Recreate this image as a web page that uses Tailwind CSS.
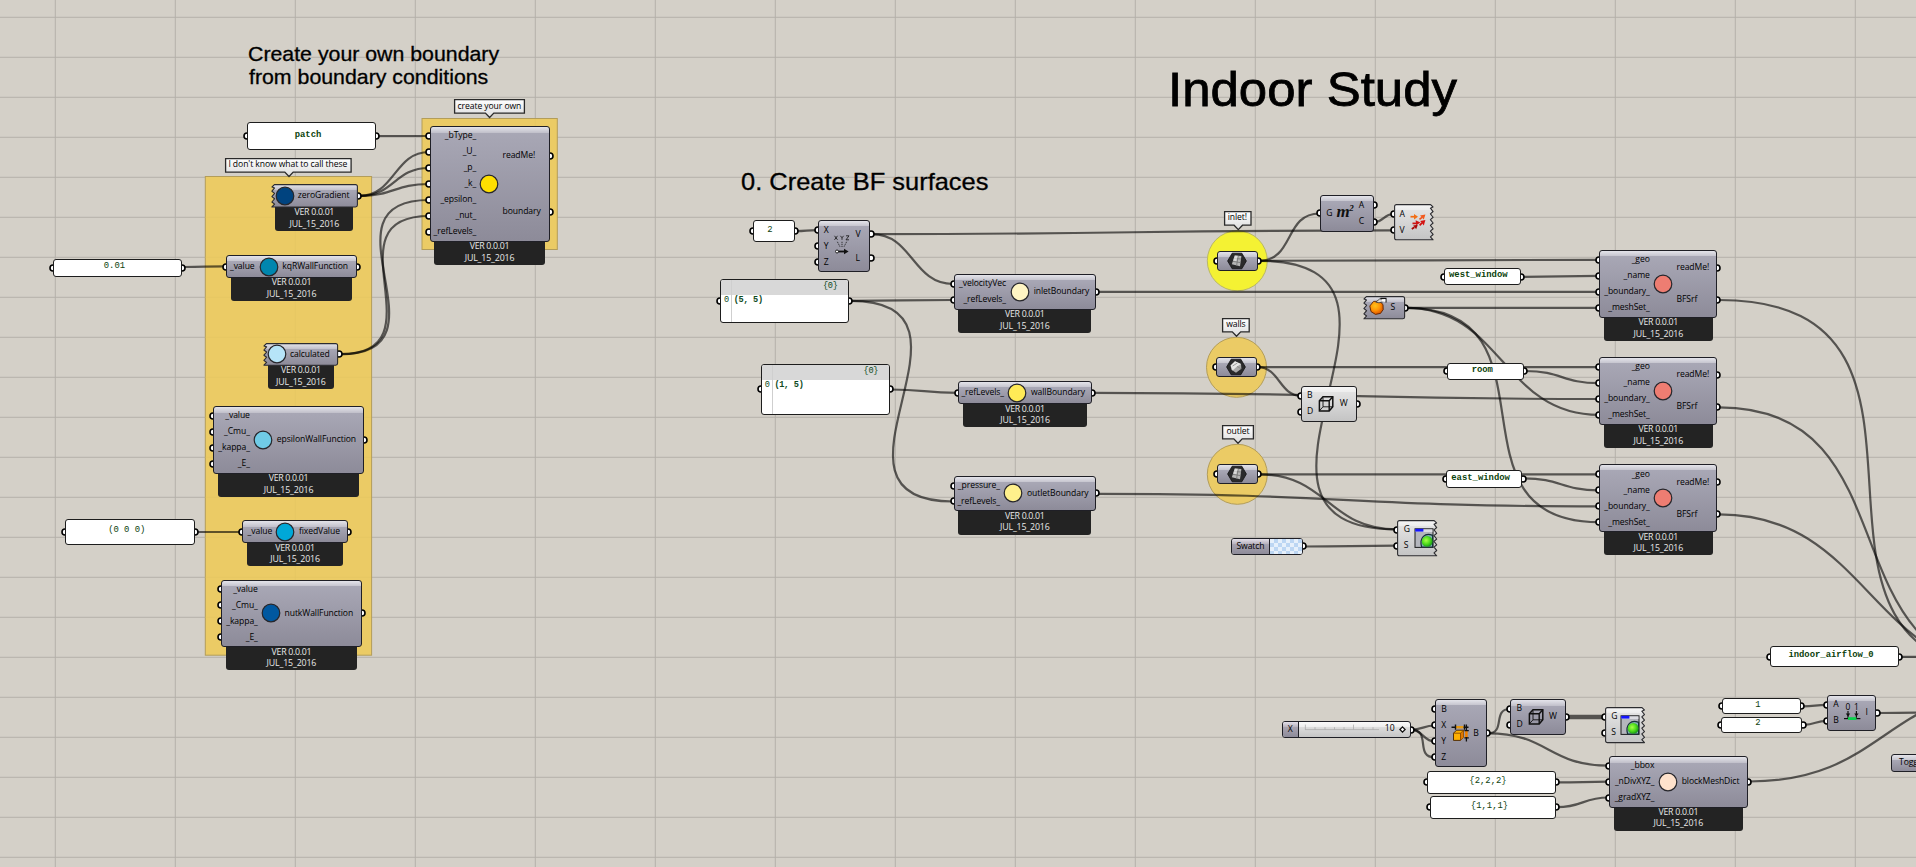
<!DOCTYPE html>
<html lang="en">
<head>
<meta charset="utf-8">
<title>Indoor Study</title>
<script src="https://cdn.jsdelivr.net/npm/@tailwindcss/browser@4"></script>
</head>
<body class="overflow-hidden">
<main id="canvas" class="relative h-[867px] w-[1916px] overflow-hidden bg-[#d4d0c8] font-['Open_Sans','Noto_Sans',sans-serif] text-[8.6px] leading-none tracking-[-.08px] text-black">
  <svg id="backdrop" class="absolute inset-0 h-full w-full" viewBox="0 0 1916 867"></svg>
</main>

<script>
const canvas = document.getElementById('canvas');
const backdrop = document.getElementById('backdrop');
let uid = 0;

/* ---------- grid, groups and wires ---------- */
let bg = '';
const groupRect = (x, y, w, h) => `<rect x="${x}" y="${y}" width="${w}" height="${h}" fill="#ebcb65" stroke="#b39d59" stroke-width="1"/>`;
const groupDot = (x, y, c, s) => `<circle cx="${x}" cy="${y}" r="30" fill="${c}" stroke="${s}" stroke-width="1"/>`;
bg += groupRect(205.3, 176.5, 166.3, 478.7) + groupRect(422, 118.5, 135.3, 131);
bg += groupDot(1237.3, 260.8, '#f4f233', '#b9b767') + groupDot(1236.5, 367.3, '#ebcb65', '#b39d59') + groupDot(1237.3, 474.3, '#ebcb65', '#b39d59');
let grid = '';
for (let x = 55.3; x < 1916; x += 120) grid += `M${x} 0V867`;
for (let y = 17.3; y < 867; y += 40) grid += `M0 ${y}H1916`;
bg = `<path d="${grid}" stroke="#b4b1aa" stroke-width="1" fill="none"/>` + bg +
     `<path d="M295.3 177V655M535.3 119V249M205.3 217.3H371M205.3 257.3H371M205.3 297.3H371M205.3 337.3H371M205.3 377.3H371M205.3 417.3H371M205.3 457.3H371M205.3 497.3H371M205.3 537.3H371M205.3 577.3H371M205.3 617.3H371" stroke="#e3c562" stroke-width=".6" fill="none"/>`;

const wires = [
  [376, 136, 429, 136], [360, 195.8, 429, 152], [360, 195.8, 429, 168], [360, 195.8, 429, 184],
  [340.5, 354.2, 429, 200], [340.5, 354.2, 429, 216], [184, 267, 225, 266.3], [196.5, 532, 241, 532],
  [796, 231.2, 817, 230.2], [872, 234.1, 953, 284], [872, 234.1, 1393, 230.4],
  [851, 300.8, 953, 300], [851, 300.8, 953, 501.5], [891, 389.5, 957.5, 392.8],
  [1098, 291.8, 1599, 291.8], [1093, 392.8, 1599, 399], [1098, 493.8, 1599, 506.4],
  [1259, 260.8, 1319.5, 213.5], [1259, 260.8, 1599, 259.8], [1259, 260.8, 1397, 529.4],
  [1375, 221.8, 1393, 214], [1406, 307.8, 1599, 307.8], [1406, 307.8, 1599, 414.9], [1406, 307.8, 1599, 522.2],
  [1258, 367.2, 1599, 367.2], [1258, 367.2, 1301, 395.8], [1259, 474.4, 1599, 474.4], [1259, 474.4, 1397, 529.4],
  [1522, 276.8, 1599, 275.8], [1525, 371, 1599, 383.2], [1523, 478.3, 1599, 490.3], [1304, 546.5, 1397, 545.6],
  [1411, 729.7, 1435, 725.5], [1411, 729.7, 1435, 741.5], [1411, 729.7, 1435, 757.5],
  [1488, 733.3, 1510, 709], [1488, 733.3, 1608.5, 765.7], [1557, 782.4, 1608.5, 781.7], [1557, 807.2, 1608.5, 797.5],
  [1567, 715.8, 1605, 715.8], [1567, 718.2, 1605, 718.2],
  [1803, 706.4, 1827, 704.8], [1804, 724.8, 1827, 720.8],
  [1719, 300, 2020, 672], [1719, 407.3, 2020, 672], [1719, 514.4, 2020, 672],
  [1900.5, 656.8, 2020, 657.4], [1878, 713, 2020, 711], [1749.5, 781.5, 2020, 689]
];
for (const [x1, y1, x2, y2] of wires) {
  const h = Math.max(Math.abs(x2 - x1) / 2, Math.abs(y2 - y1) * 0.75);
  bg += `<path d="M${x1} ${y1}C${x1 + h} ${y1} ${x2 - h} ${y2} ${x2} ${y2}" fill="none" stroke="#000" stroke-opacity=".6" stroke-width="2.2"/>`;
}
backdrop.innerHTML = bg;

/* ---------- building blocks ---------- */
const place = (x, y, w, h) => `left:${x}px;top:${y}px;width:${w}px;height:${h}px`;
const grip = (x, y) => `<svg class="absolute overflow-visible" width="8" height="8" style="left:${x - 4}px;top:${y - 4}px"><circle cx="4" cy="4" r="3" fill="#fff" stroke="#000" stroke-width="1.6"/></svg>`;
const badge = (top) => `<div class="absolute inset-x-[4.7px] flex flex-col items-center rounded-b-[3px] bg-[#232323] pt-[.4px] text-[8.8px] leading-[11.4px] text-[#e9e9e9]" style="top:${top}px;height:24.2px"><span class="block tracking-[-.3px]">VER 0.0.01</span><span class="block tracking-[-.15px]">JUL_15_2016</span></div>`;

/* box outline with a torn edge on one side */
function outline(w, h, torn) {
  const n = Math.round(h / 5.8), s = (h - 2) / n;
  let d;
  if (torn === 'left') {
    d = `M${w - 2.5} .6H3.4L1 3`;
    for (let i = 1; i <= n; i++) d += `L3.6 ${1 + (i - .45) * s}L.9 ${i === n ? h - .6 : 1.8 + i * s}`;
    return d + `H${w - 2.5}Q${w - .6} ${h - .6} ${w - .6} ${h - 2.5}V2.5Q${w - .6} .6 ${w - 2.5} .6Z`;
  }
  d = `M2.5 .6H${w - 3.4}L${w - 1} 3`;
  for (let i = 1; i <= n; i++) d += `L${w - 3.6} ${1 + (i - .45) * s}L${w - .9} ${i === n ? h - .6 : 1.8 + i * s}`;
  return d + `H2.5Q.6 ${h - .6} .6 ${h - 2.5}V2.5Q.6 .6 2.5 .6Z`;
}

const DARK = ['#e4e4ea', '#c3c2cc', '#a8a7b5', '#8d8b99'];
const LIGHT = ['#f6f6f6', '#ececec', '#e2e2e2', '#c4c4c4'];

function node(o) {
  const { x, y, w, h, ins = [], outs = [] } = o;
  const slot = (h - 4) / (ins.length || 1), oslot = (h - 4) / (outs.length || 1);
  let s = `<section class="absolute" style="${place(x, y, w, h)}">`;
  ins.forEach((_, i) => s += grip(-.1, 2 + slot * (i + .5)));
  outs.forEach((_, i) => s += grip(w + .1, 2 + oslot * (i + .5)));
  if (o.ver) s += badge(h - 1);
  if (o.torn) {
    const c = o.light ? LIGHT : DARK, id = 'g' + (++uid), k = 5.5 / h;
    s += `<svg class="absolute inset-0 overflow-visible" width="${w}" height="${h}"><defs><linearGradient id="${id}" x2="0" y2="1"><stop offset="0" stop-color="${c[0]}"/><stop offset="${k}" stop-color="${c[1]}"/><stop offset="${k}" stop-color="${c[2]}"/><stop offset="1" stop-color="${c[3]}"/></linearGradient></defs><path d="${outline(w, h, o.torn)}" fill="url(#${id})" stroke="#2c2c30" stroke-width="1.1" stroke-linejoin="round"/></svg>`;
    s += `<div class="absolute inset-0 flex py-[2px]">`;
  } else if (o.light) {
    s += `<div class="absolute inset-0 flex rounded-[3px] border-[1.3px] border-[#1f1f22] bg-[linear-gradient(#f6f6f6,#ececec_5.5px,#e2e2e2_5.5px,#c4c4c4)] py-[1px]">`;
  } else {
    s += `<div class="absolute inset-0 flex rounded-[3px] border-[1.3px] border-[#1f1f26] bg-[linear-gradient(#e4e4ea,#c3c2cc_5.5px,#a8a7b5_5.5px,#8d8b99)] py-[1px]">`;
  }
  const b = o.torn ? 0 : 1;
  const label = t => `<span class="relative -top-[.4px] block whitespace-nowrap">${t}</span>`;
  if (ins.length) {
    const al = o.inLeft ? 'items-start' : 'items-end';
    s += `<div class="flex flex-col justify-around ${al}" style="${o.inLeft ? `padding-left:${o.inLeft - b}px` : `width:${o.inRight - b}px`}">${ins.map(label).join('')}</div>`;
  }
  if (outs.length) {
    s += `<div class="absolute inset-y-[1px] flex flex-col justify-around" style="left:${o.outLeft - b}px">${outs.map(label).join('')}</div>`;
  }
  s += '</div>';
  if (o.dot) s += `<svg class="absolute overflow-visible" width="20" height="20" style="left:${o.cx - 10}px;top:${h / 2 - 10}px"><circle cx="10" cy="10" r="8.8" fill="${o.dot}" stroke="#26262b" stroke-width="1.2"/></svg>`;
  if (o.icon) s += `<svg class="absolute overflow-visible" width="24" height="24" viewBox="-12 -12 24 24" style="left:${o.cx - 12}px;top:${(o.cy ?? h / 2) - 12}px">${o.icon}</svg>`;
  canvas.insertAdjacentHTML('beforeend', s + '</section>');
}

function panel(x, y, w, h, text, cx, cy, bold, gripY = h / 2) {
  canvas.insertAdjacentHTML('beforeend',
    `<section class="absolute" style="${place(x, y, w, h)}">${grip(-.1, gripY)}${grip(w + .1, gripY)}
      <div class="absolute inset-0 rounded-[3px] border-[1.4px] border-[#1d1d1d] bg-white"></div>
      <span class="absolute -translate-1/2 whitespace-nowrap font-['Liberation_Mono','Courier_New',monospace] text-[8.9px] tracking-normal ${bold ? 'font-bold text-[#0a3f0a]' : 'text-[#0e3f0e]'}" style="left:${cx - x}px;top:${cy - y}px">${text}</span></section>`);
}
function listPanel(x, y, w, h, text, gripY) {
  canvas.insertAdjacentHTML('beforeend',
    `<section class="absolute font-['Liberation_Mono','Courier_New',monospace] text-[8.6px] tracking-[-.3px] text-[#0e4a1c]" style="${place(x, y, w, h)}">${grip(-.1, gripY)}${grip(w + .1, gripY)}
      <div class="absolute inset-0 overflow-hidden rounded-[3px] border-[1.4px] border-[#1d1d1d] bg-white">
        <div class="flex h-[14.6px] items-start justify-end bg-[#d8d8d8] pt-[1.6px] pr-[10.5px]">{0}</div>
        <div class="flex pt-[1.4px] pl-[3px]"><span class="w-[9.7px]">0</span><span class="font-bold">${text}</span></div>
        <div class="absolute inset-y-0 left-[10px] w-px bg-[#cfcfcf]"></div>
      </div></section>`);
}
function tag(x, y, w, h, text, tip) {
  const t = tip - x;
  canvas.insertAdjacentHTML('beforeend',
    `<section class="absolute flex items-center justify-center" style="${place(x, y, w, h)}">
      <svg class="absolute inset-0 overflow-visible" width="${w}" height="${h + 5}"><defs><linearGradient id="t${++uid}" x2="0" y2="1"><stop offset="0" stop-color="#fff"/><stop offset="1" stop-color="#dcdcdc"/></linearGradient></defs>
      <path d="M.6 .6H${w - .6}V${h - .6}H${t + 4.2}L${t} ${h + 3.8}L${t - 4.2} ${h - .6}H.6Z" fill="url(#t${uid})" stroke="#2a2a2a" stroke-width="1.3"/></svg>
      <span class="relative -top-[.8px] whitespace-nowrap">${text}</span></section>`);
}
function title(x, base, stretch, size, weight, text) {
  canvas.insertAdjacentHTML('beforeend',
    `<h2 class="absolute origin-left whitespace-nowrap font-['Liberation_Sans',Arial,sans-serif] tracking-normal" style="left:${x}px;top:${base - size * .905}px;font-size:${size}px;line-height:${size * 1.149}px;transform:scaleX(${stretch});-webkit-text-stroke:${weight}px #000">${text}</h2>`);
}

/* ---------- titles and tags ---------- */
title(248, 61.8, 1.045, 20.4, .3, 'Create your own boundary');
title(248.5, 84.2, 1.045, 20.4, .3, 'from boundary conditions');
title(741, 190, 1.06, 24, .3, '0. Create BF surfaces');
title(1168, 105.8, 1.04, 49, .8, 'Indoor Study');
tag(453.9, 99.3, 71, 14.7, 'create your own', 489.5);
tag(224.5, 158, 126.7, 14.7, "I don't know what to call these", 288.5);
tag(1223.5, 211, 27.6, 14.8, 'inlet!', 1237.8);
tag(1222, 318, 27.8, 14.5, 'walls', 1236.5);
tag(1222, 425, 32, 14.5, 'outlet', 1238);

/* ---------- boundary conditions ---------- */
node({ x: 429.5, y: 126, w: 120, h: 115.8, ver: 1, ins: ['_bType_', '_U_', '_p_', '_k_', '_epsilon_', '_nut_', '_refLevels_'], outs: ['readMe!', 'boundary'], inRight: 46.7, outLeft: 73, cx: 59.6, dot: '#ffdf00' });
node({ x: 270.8, y: 184.3, w: 87, h: 23.6, ver: 1, torn: 'left', outs: ['zeroGradient'], outLeft: 27, cx: 14, dot: '#00437f' });
node({ x: 226, y: 255.2, w: 131, h: 22.8, ver: 1, ins: ['_value'], outs: ['kqRWallFunction'], inRight: 28.6, outLeft: 56.3, cx: 42.7, dot: '#0086ae' });
node({ x: 263.3, y: 343, w: 75.2, h: 22.8, ver: 1, torn: 'left', outs: ['calculated'], outLeft: 26.7, cx: 13.5, dot: '#b6e4f8' });
node({ x: 213.2, y: 406.2, w: 150.6, h: 67.6, ver: 1, ins: ['_value', '_Cmu_', '_kappa_', '_E_'], outs: ['epsilonWallFunction'], inRight: 36.7, outLeft: 63.6, cx: 50.3, dot: '#70cbe6' });
node({ x: 242.2, y: 520.3, w: 105.6, h: 23, ver: 1, ins: ['_value'], outs: ['fixedValue'], inRight: 30, outLeft: 56.7, cx: 43, dot: '#00a8d8' });
node({ x: 221, y: 579.5, w: 140.8, h: 67.8, ver: 1, ins: ['_value', '_Cmu_', '_kappa_', '_E_'], outs: ['nutkWallFunction'], inRight: 36.8, outLeft: 63.5, cx: 50.3, dot: '#0058a0' });
panel(247.2, 122.3, 128.7, 27.4, 'patch', 308, 134.6, true);
panel(53.4, 259, 129, 17.8, '0.01', 114.4, 266, false);
panel(65.2, 519, 129.6, 26, '(0 0 0)', 126.8, 530.3, false);

/* ---------- surfaces ---------- */
const xyz = `<g fill="none" stroke="#111" stroke-width=".8"><path d="M-4.6-4.2L-2 .8M0-4.2V1M4.6-4.2L2 .8" stroke-dasharray="1.3 .8"/><path d="M-7.5-10.2l3 4m0-4l-3 4M-1.6-10.2L0-8.2l1.6-2M0-8.2v2M4-10.2h3L4-6.2h3"/></g><circle cx="-5" cy="5.5" r="1.5" fill="#fff" stroke="#111" stroke-width=".9"/><path d="M-3.6 5.5H2.5" stroke="#111" stroke-width="1.8"/><path d="M2 2.8L6.6 5.5L2 8.2Z" fill="#111"/>`;
node({ x: 817.7, y: 220.3, w: 52.8, h: 52.2, ins: ['X', 'Y', 'Z'], outs: ['V', 'L'], inLeft: 6, outLeft: 37.8, cx: 24.6, icon: xyz });
node({ x: 953.7, y: 274.3, w: 142.2, h: 35.5, ver: 1, ins: ['_velocityVec', '_refLevels_'], outs: ['inletBoundary'], inRight: 52.3, outLeft: 80, cx: 66.6, dot: '#fff5c4' });
node({ x: 958, y: 381.2, w: 134, h: 23, ver: 1, ins: ['_refLevels_'], outs: ['wallBoundary'], inRight: 46, outLeft: 73, cx: 59.2, dot: '#ffea56' });
node({ x: 953.7, y: 475.6, w: 142.2, h: 35.8, ver: 1, ins: ['_pressure_', '_refLevels_'], outs: ['outletBoundary'], inRight: 46.3, outLeft: 73.3, cx: 59.4, dot: '#fff08c' });
panel(753.3, 220.3, 41.6, 21.6, '2', 770, 229.6, false);
listPanel(720, 279.3, 129, 43.8, '(5, 5)', 21.4);
listPanel(760.7, 364, 129, 51, '(1, 5)', 25.4);

const hexBase = `<path d="M-4.8-7.8H4.8L9.4 0L4.8 7.8H-4.8L-9.4 0Z" fill="#2a2a2c" stroke="#111" stroke-width=".8"/>`;
const face = hexBase + `<path d="M-2.2-5.6L4.4-5L3 5.2L-5.2 3.2Z" fill="#b5b5b5"/><path d="M1.2-5.2L-.4 4.6M-3.2-2.6L4-2M-4 .4L3.5 1.6" stroke="#787878" stroke-width=".9"/><path d="M-2.2-5.6L.8-5.3L-.8-.1L-3.8-.6Z" fill="#ededed" fill-opacity=".7"/>`;
const brep = hexBase + `<path d="M-5.4-1.6L-1-5.8L5-3L5.4 1.8L0 5.8L-4.6 2.8Z" fill="#a9a9a9"/><path d="M-1-5.8L5-3L1-.6L-3.4 3.4L-5.4-1.6Z" fill="#e6e6e6"/><path d="M1-.6L5.2 1.8M-3.4-1L1.4-4" stroke="#858585" stroke-width=".8"/>`;
node({ x: 1217, y: 250.6, w: 41, h: 20.3, ins: [''], outs: [''], inLeft: 5, outLeft: 30, cx: 20, icon: face });
node({ x: 1216, y: 357.2, w: 41, h: 20, ins: [''], outs: [''], inLeft: 5, outLeft: 30, cx: 20.4, icon: brep });
node({ x: 1217, y: 464, w: 41, h: 20.3, ins: [''], outs: [''], inLeft: 5, outLeft: 30, cx: 20, icon: face });

node({ x: 1320.2, y: 195.3, w: 53.5, h: 36.3, ins: ['G'], outs: ['A', 'C'], inLeft: 6, outLeft: 38.6, cx: 25 });
canvas.insertAdjacentHTML('beforeend', `<div class="absolute top-[203px] left-[1336.5px] flex items-start font-['Liberation_Serif',serif] font-bold italic text-[#111]"><span class="text-[17px] leading-[18px]">m</span><span class="-ml-[.5px] text-[9px] leading-[10px]">2</span></div>`);
const arrows = `<g stroke-width="1.7" fill="none"><path d="M-7.5-5.3H-4" stroke="#f06a12"/><path d="M1.5-2.6L4-4.6" stroke="#f0501a"/><path d="M-5.5 1.4H-1.5" stroke="#cc1212"/><path d="M1.6 3.4L4 .8" stroke="#d01010"/><path d="M-6.2 7L-3.6 5.2" stroke="#a00"/></g><path d="M-4-8L0-5.3L-4-2.6Z" fill="#f36f15"/><path d="M2-6.6L7.4-7.6L5.8-2.6Z" fill="#f3591c"/><path d="M-2.4-1.8L2.4 .4L-1.8 3.2Z" fill="#d01212"/><path d="M2.2-1L7.4-2L5.8 3.4Z" fill="#d41313"/><path d="M-4.8 3.4L-.2 2.8L-1.8 7.2Z" fill="#a80808"/>`;
node({ x: 1393.6, y: 204.2, w: 40, h: 36.4, torn: 'right', light: 1, ins: ['A', 'V'], inLeft: 6, cx: 24.2, icon: arrows });
const orange = `<defs><radialGradient id="or" cx=".4" cy=".35" r=".7"><stop offset="0" stop-color="#ffc21a"/><stop offset=".5" stop-color="#ff9406"/><stop offset="1" stop-color="#d84a00"/></radialGradient></defs><path d="M-3.5-5.6L2.5-5.8L6-2.5L6.2 2.6L3.5 6.4L-1.5 7.4L-6 4.6L-7.2-1Z" fill="url(#or)" stroke="#5a2400" stroke-width=".9"/><path d="M-1.2-4.8L2.6-8H6V-5.2L2-4.2Z" fill="#d9d9d9" stroke="#333" stroke-width=".8"/><path d="M3.4-8.6H9V-4.4" stroke="#111" stroke-width="1.1" fill="none"/><path d="M5-7.8H8.4V-5.4H5Z" fill="#fff"/>`;
node({ x: 1363, y: 296.2, w: 42.2, h: 23.4, torn: 'left', outs: ['S'], outLeft: 27.6, cx: 13.8, cy: 11, icon: orange });
const cube = `<g fill="none" stroke="#111"><path d="M-6.6-3.2L-3-7.2H6.8V2.8L3.2 7H-6.6Z" stroke-width="1.5"/><path d="M-6.6-3.2H3.2V7M3.2-3.2L6.8-7.2" stroke-width="1.4"/><path d="M-3-6.6V2.8H6.4M-3 2.8L-6.4 6.6" stroke-width=".9"/></g>`;
node({ x: 1301, y: 386.2, w: 55.8, h: 35.6, light: 1, ins: ['B', 'D'], outs: ['W'], inLeft: 6, outLeft: 38.8, cx: 25.2, icon: cube });
const preview = `<defs><radialGradient id="gr" cx=".4" cy=".4" r=".65"><stop offset="0" stop-color="#a8ff48"/><stop offset=".55" stop-color="#4fdc1c"/><stop offset="1" stop-color="#149018"/></radialGradient></defs><rect x="-9" y="-9.2" width="18" height="18.6" fill="#b4b6bd" stroke="#1c1c1c" stroke-width="1"/><path d="M-8.4-8.6H8.4V-6H-8.4Z" fill="#dcdce2"/><path d="M-8.8-9.2H-.6V-6.4H-8.8Z" fill="#1414ff"/><path d="M8.6-2.6V9H-2.4C-5-.4 1.4-6 8.6-2.6Z" fill="#7fb0b4" stroke="#183038" stroke-width="1.2"/><circle cx="3.2" cy="3.4" r="5.4" fill="url(#gr)"/>`;
node({ x: 1397.4, y: 519.5, w: 40.6, h: 36.4, torn: 'right', light: 1, ins: ['G', 'S'], inLeft: 6.4, cx: 26.2, icon: preview });

/* colour swatch */
canvas.insertAdjacentHTML('beforeend', `<section class="absolute top-[538.2px] left-[1231px] h-[16.8px] w-[72px]">${grip(72, 8.2)}
  <div class="absolute inset-0 flex overflow-hidden rounded-[3px] border-[1.3px] border-[#1f1f26]">
    <div class="flex w-[38px] items-center justify-center border-r-[1.3px] border-[#1f1f26] bg-[linear-gradient(#e4e0ea,#b7b2bd_5px,#a8a3b0_5px,#8d8b99)]"><span class="relative -top-[.6px]">Swatch</span></div>
    <div class="flex-1 bg-[#e6f0fb] bg-[conic-gradient(#bcd6f3_25%,#e6f0fb_0_50%,#bcd6f3_0_75%,#e6f0fb_0)] bg-[size:8px_8px]"></div>
  </div></section>`);

/* BFSurface components */
for (const y of [250, 357.1, 464.3])
  node({ x: 1599.2, y, w: 118.2, h: 68, ver: 1, ins: ['_geo', '_name', '_boundary_', '_meshSet_'], outs: ['readMe!', 'BFSrf'], inRight: 50.6, outLeft: 77.3, cx: 64.2, dot: '#ee7d72' });
panel(1444.2, 268.3, 77, 16.8, 'west_window', 1478.3, 275.3, true);
panel(1447, 363, 77, 16.6, 'room', 1482.3, 370, true);
panel(1445.8, 470.3, 76.7, 17.4, 'east_window', 1480.6, 477.6, true);

/* ---------- block mesh ---------- */
canvas.insertAdjacentHTML('beforeend', `<section class="absolute top-[721px] left-[1281.5px] h-[17px] w-[129px]">${grip(129, 8.6)}
  <div class="absolute inset-0 flex overflow-hidden rounded-[3px] border-[1.3px] border-[#1f1f26] bg-[linear-gradient(#fafafa,#ededed_5px,#dddddd_5px,#c6c6c6)]">
    <div class="flex w-[16.3px] items-center justify-center border-r-[1.3px] border-[#1f1f26] bg-[linear-gradient(#e4e0ea,#b7b2bd_5px,#a8a3b0_5px,#8d8b99)]"><span class="relative -top-[.6px]">X</span></div>
    <svg class="shrink-0" width="80" height="15"><path d="M6 7.6H83M6.4 2.6V7.6M16 5.2V7.6M26 5.2V7.6M35.5 5.2V7.6M45 5.2V7.6M54.5 2.6V7.6M64 5.2V7.6M74 5.2V7.6" stroke="#a6a6a6" stroke-width=".7" fill="none"/></svg>
  </div>
  <div class="absolute inset-y-0 right-[5px] flex items-center gap-[4px]"><span class="relative -top-[.8px]">10</span><svg width="7" height="7"><path d="M3.5 .9L6.1 3.5L3.5 6.1L.9 3.5Z" fill="#fff" stroke="#111" stroke-width="1.3"/></svg></div></section>`);
const boxIcon = `<path d="M-6.5 .2L-3.5-2.8H3.5V4.2L.5 7.4H-6.5Z" fill="#ffb000" stroke="#442200" stroke-width=".9"/><path d="M.5 7.4L3.5 4.2V-2.8L.5 .2Z" fill="#e07800"/><path d="M-6.5 .2H.5V7.4M.5 .2L3.5-2.8" fill="none" stroke="#7a3d00" stroke-width=".8"/><path d="M-5-5.8H3.5" stroke="#e79a10" stroke-width="2.4"/><path d="M-8.5-5.8H-4M3.5-5.8H8.5M-4.5-8.4V-3.2M4.5-8.4V-3.2" stroke="#111" stroke-width="1.4"/><path d="M6.4-2.5V5" stroke="#f08000" stroke-width="2.6"/><path d="M6.4-8.6V-3M6.4 4V8.6M4.4 4.8H8.8M4.4-2.4H8.8" stroke="#111" stroke-width="1.3"/>`;
node({ x: 1435.2, y: 699.3, w: 51.6, h: 68.2, ins: ['B', 'X', 'Y', 'Z'], outs: ['B'], inLeft: 6, outLeft: 38, cx: 25, icon: boxIcon });
node({ x: 1510.3, y: 699, w: 56, h: 36, ins: ['B', 'D'], outs: ['W'], inLeft: 6.2, outLeft: 38.8, cx: 26.2, icon: cube });
node({ x: 1605.2, y: 706.7, w: 40.4, h: 36.2, torn: 'right', light: 1, ins: ['G', 'S'], inLeft: 6, cx: 25.3, icon: preview });
node({ x: 1608.9, y: 755.6, w: 138.9, h: 52, ver: 1, ins: ['_bbox', '_nDivXYZ_', '_gradXYZ_'], outs: ['blockMeshDict'], inRight: 45.5, outLeft: 72.8, cx: 59.5, dot: '#ffe2cc' });
panel(1427.2, 771, 128.6, 22.8, '{2,2,2}', 1488, 781, false);
panel(1429.6, 795.7, 126.2, 23.2, '{1,1,1}', 1489.5, 805.6, false);

const interval = `<path d="M-4-2V5M4.4-2V5" stroke="#111" stroke-width="1.2"/><path d="M-6.2 .4H-1.8L-4 3.6ZM2.2 .4H6.6L4.4 3.6Z" fill="#111"/><path d="M-8 5.6H8.4" stroke="#111" stroke-width="1.2"/><path d="M-4 5.6H4.4" stroke="#0bd14c" stroke-width="2.8"/>`;
node({ x: 1827.2, y: 695, w: 49.3, h: 35.5, ins: ['A', 'B'], outs: ['I'], inLeft: 6, outLeft: 38.2, cx: 24.6, icon: interval });
canvas.insertAdjacentHTML('beforeend', `<div class="absolute top-[702.6px] left-[1845.4px] flex gap-[3.8px] text-[8.4px]"><span>0</span><span>1</span></div>`);
panel(1770.2, 646, 129, 21.4, 'indoor_airflow_0', 1831, 655.4, true);
panel(1722.2, 698.2, 79, 16.3, '1', 1758, 705, false);
panel(1721.2, 716.6, 81.3, 16.3, '2', 1758, 723.3, false);

/* toggle, cut off by the right edge of the view */
canvas.insertAdjacentHTML('beforeend', `<section class="absolute top-[754px] left-[1891px] flex h-[18px] w-[70px] items-center rounded-[3px] border-[1.3px] border-[#1f1f26] bg-[linear-gradient(#e4e4ea,#c3c2cc_5.5px,#a8a7b5_5.5px,#8d8b99)] pl-[7px]"><span class="relative -top-[.6px]">Toggle</span></section>`);
</script>
</body>
</html>
